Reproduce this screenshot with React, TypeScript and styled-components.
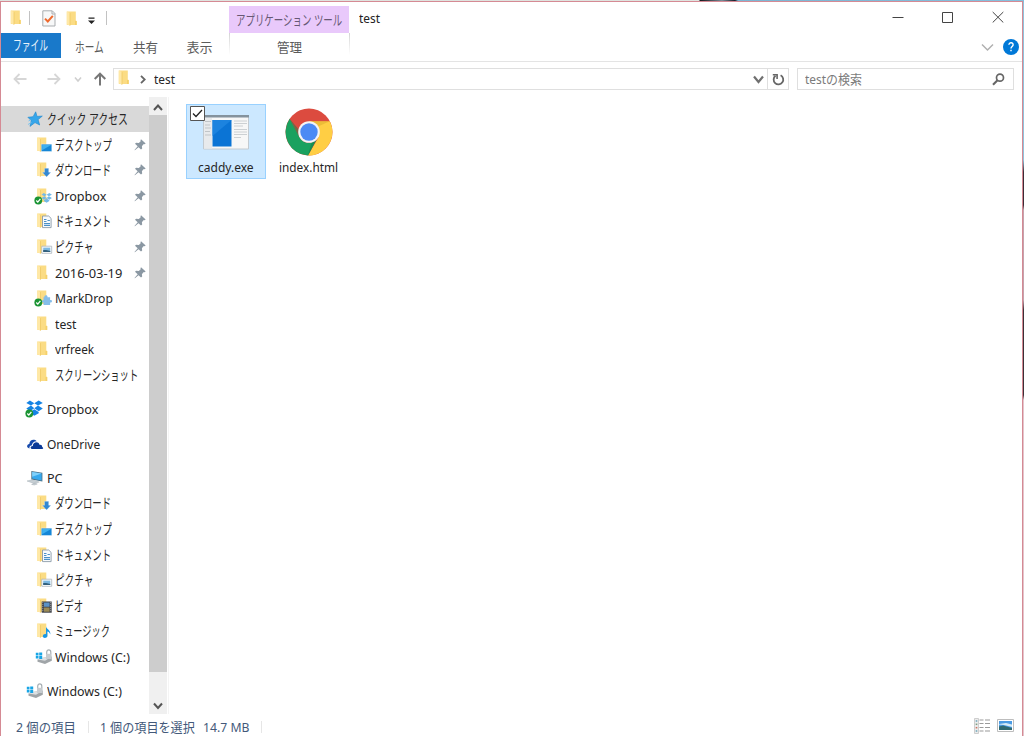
import React, { useLayoutEffect, useRef, useState } from 'react';
import styled, { createGlobalStyle } from 'styled-components';

const Global = createGlobalStyle`
  * { box-sizing: border-box; }
  html, body { margin: 0; height: 100%; overflow: hidden; background: #fff; }
  body { font-family: "Noto Sans", "Noto Sans CJK JP", sans-serif; font-size: 13px; color: #262626; }
  svg { display: block; flex: none; }
`;

const Desktop = styled.div`
  width: 1024px;
  height: 736px;
  padding: 1px 1px 0 0;
  background: linear-gradient(90deg, #dfe3df 0 699px, #15181c 700px, #7a8c98 722px, #17202b 735px, #7db5d2 738px, #86c0de 100%) top / 100% 2px no-repeat,
    linear-gradient(180deg, #8fc3dd 0 160px, #3c2c36 172px 205px, #c5a3ad 210px 300px, #3c3037 310px 395px, #e4c5cc 400px) right / 1px 100% no-repeat;
`;
const Window = styled.div`
  height: 735px;
  display: flex;
  flex-direction: column;
  background: #fff;
  border: 1px solid #d58a94;
  border-bottom: 0;
`;
const TitleBar = styled.header`
  height: 31px;
  display: flex;
  flex: none;
`;
const QuickTools = styled.div`
  width: 228px;
  display: flex;
  padding: 8px 0 0 9px;
`;
const ToolSlot = styled.div<{ $w: number; $top?: number }>`
  width: ${p => p.$w}px;
  padding-top: ${p => p.$top ?? 0}px;
  flex: none;
`;
const Separator = styled.div<{ $h: number; $gap: number; $top?: number }>`
  width: 1px;
  height: ${p => p.$h}px;
  margin: ${p => p.$top ?? 0}px ${p => p.$gap}px 0 0;
  background: #c2c2c2;
  flex: none;
`;
const ContextHeading = styled.div`
  width: 120px;
  height: 27px;
  margin-top: 4px;
  padding: 4px 0 0 7px;
  background: #e9c9fb;
  color: #675874;
`;
const WindowTitle = styled.div`
  flex: 1;
  padding: 6px 0 0 10px;
  color: #222;
`;
const Controls = styled.div`
  display: flex;
  gap: 38px;
  padding: 9px 18px 0 0;
`;
const Tabs = styled.nav`
  height: 28px;
  display: flex;
  flex: none;
  align-items: flex-start;
  color: #5b5b5b;
`;
const FileTab = styled.div`
  width: 59.500px;
  height: 25px;
  padding: 2px 0 0 12px;
  background: #1979ca;
  color: #e9f3fc;
`;
const Tab = styled.div<{ $w: number; $pl: number }>`
  width: ${p => p.$w}px;
  padding: 4px 0 0 ${p => p.$pl}px;
  flex: none;
`;
const ContextTab = styled.div`
  width: 121px;
  height: 22px;
  padding: 4px 0 0 48px;
  background: linear-gradient(#d4d4d4, #fff) left / 1px 100% no-repeat,
    linear-gradient(#d4d4d4, #fff) right / 1px 100% no-repeat;
`;
const RibbonTools = styled.div`
  display: flex;
  gap: 9px;
  margin-left: auto;
  padding: 6px 3px 0 0;
  align-items: center;
`;
const AddressRow = styled.div`
  height: 36px;
  display: flex;
  flex: none;
  padding: 6px 8px 0 12px;
  border-top: 1px solid #e4e4e4;
`;
const NavIcons = styled.div`
  width: 100px;
  height: 22px;
  display: flex;
  align-items: center;
`;
const NavSlot = styled.div<{ $w: number }>`
  width: ${p => p.$w}px;
  flex: none;
`;
const Box = styled.div<{ $w: number; $pl: number }>`
  width: ${p => p.$w}px;
  height: 22px;
  display: flex;
  align-items: center;
  padding-left: ${p => p.$pl}px;
  border: 1px solid #dfdfdf;
`;
const Refresh = styled.div`
  width: 21px;
  height: 22px;
  margin-right: 8px;
  display: grid;
  place-items: center;
  border: 1px solid #dfdfdf;
  border-left: 0;
`;
const CrumbIcon = styled.div`
  width: 22px;
  padding-bottom: 3px;
`;
const Crumb = styled.div`
  flex: 1;
  padding: 0 0 1px 7px;
`;
const SearchHint = styled.div`
  flex: 1;
  padding-bottom: 1px;
  color: #7b7b7b;
`;
const End = styled.div<{ $gap: number }>`
  padding-right: ${p => p.$gap}px;
`;
const Body = styled.main`
  flex: 1;
  min-height: 0;
  display: flex;
`;
const Tree = styled.aside`
  width: 148px;
  padding-top: 9.3px;
`;
const Row = styled.div<{ $level: number; $active?: boolean; $gap?: boolean }>`
  height: 25.6px;
  margin-top: ${p => (p.$gap ? 8.7 : 0)}px;
  padding-left: ${p => (p.$level ? 32.5 : 24)}px;
  padding-right: 3px;
  display: flex;
  align-items: center;
  background: ${p => (p.$active ? '#d9d9d9' : 'transparent')};
`;
const RowLabel = styled.div`
  flex: 1;
  padding-left: 1.5px;
`;
const Scrollbar = styled.div`
  width: 18px;
  height: 617px;
  display: flex;
  flex-direction: column;
  background: #f0f0f0;
`;
const Arrow = styled.div<{ $h: number; $bottom?: boolean }>`
  height: ${p => p.$h}px;
  display: flex;
  justify-content: center;
  align-items: ${p => (p.$bottom ? 'flex-end' : 'center')};
  padding: ${p => (p.$bottom ? '0 0 4px' : '4px 0 0')};
`;
const Thumb = styled.div`
  height: 557px;
  background: #cdcdcd;
`;
const Files = styled.section`
  display: flex;
  align-items: flex-start;
  height: 617px;
  padding: 7px 0 0 17px;
  margin-left: 1px;
  border-left: 1px solid #f4f4f4;
  gap: 2.500px;
`;
const File = styled.div<{ $selected?: boolean }>`
  position: relative;
  width: 80px;
  height: 75px;
  display: flex;
  flex-direction: column;
  align-items: center;
  justify-content: space-between;
  padding: 3px 0 1px;
  border: 1px solid ${p => (p.$selected ? '#99d1ff' : 'transparent')};
  background: ${p => (p.$selected ? '#cce8ff' : 'transparent')};
`;
const Check = styled.div`
  position: absolute;
  left: 3px;
  top: 1px;
`;
const StatusBar = styled.footer`
  height: 21px;
  flex: none;
  display: flex;
  align-items: center;
  padding: 3px 8px 0 15px;
  color: #43597a;
`;
const StatusItem = styled.div<{ $w: number }>`
  width: ${p => p.$w}px;
`;
const StatusLine = styled.div<{ $gap: number }>`
  width: 1px;
  height: 12px;
  margin-right: ${p => p.$gap}px;
  background: #e6e6e6;
`;
const Views = styled.div`
  margin: -3px 0 0 auto;
  display: flex;
  align-items: center;
  gap: 7px;
`;
const TextBox = styled.span<{ $size: number }>`
  display: block;
  height: 20px;
  line-height: 20px;
  font-size: ${p => p.$size}px;
  white-space: nowrap;
`;
const TextInk = styled.span`
  display: inline-block;
  height: 20px;
  vertical-align: top;
  transform-origin: 0 50%;
`;

/* A one-line label whose glyphs are condensed or widened to fill `w` pixels. */
function Fit({ w, size = 13, children }: { w: number; size?: number; children: string }) {
  const ref = useRef<HTMLSpanElement>(null);
  const [scale, setScale] = useState(1);
  useLayoutEffect(() => {
    if (ref.current) setScale(w / ref.current.offsetWidth);
  }, [w, children]);
  return (
    <TextBox $size={size} style={{ width: w }}>
      <TextInk ref={ref} style={{ transform: `scaleX(${scale})` }}>{children}</TextInk>
    </TextBox>
  );
}

const FolderShape = () => (
  <>
    <path d="M3.800 1.600h9v8.800l.9.600v4H3.800z" fill="#fbdc84" />
    <path d="M12 11h1.700v4H12z" fill="#f5d06a" />
    <path d="M3.800 1.600l3.200 1.500v12.600l-3.200-1.500z" fill="#ffe8a6" />
    <path d="M7 3.100v12.600" stroke="#edc65c" strokeWidth=".7" />
  </>
);
const Badge = () => (
  <>
    <circle cx="4.800" cy="13.500" r="3.900" fill="#1b9434" />
    <path d="M2.800 13.500l1.500 1.600 2.600-3.200" stroke="#fff" strokeWidth="1.300" fill="none" />
  </>
);
const DropMark = ({ color }: { color: string }) => (
  <path fill={color} d="M4.600 0L9 2.800 5.700 5.200 1 2.600zM13.400 0L17.500 2.600 12.700 5.200 9 2.800zM1 8.100l4.700-2.900L9 7.900l-4.400 2.900zM12.700 5.200l4.800 2.900-4.100 2.700L9 7.900zM4.800 11.600L9 8.800l4.400 2.800v1.200L9 15.400l-4.200-2.600z" />
);

type Kind = 'star' | 'folder' | 'desktop' | 'down' | 'dropfolder' | 'doc' | 'pic' | 'mark' | 'dropbox' | 'onedrive' | 'pc' | 'video' | 'music' | 'drive';

function drawing(kind: Kind) {
  switch (kind) {
    case 'star':
      return <><path d="M11.200 1.800l1.300 4.600 5.300-.3-4.200 3.500 1.600 5.400-4.700-2.400-5 3.800 1.200-5.800-3.300-3.300 5.200-.6z" fill="#35a6ea" stroke="#1b84cc" strokeWidth=".6" /><path d="M3.500 14.500l3.500-2.200M4 11l2-1" stroke="#7cc4ee" /></>;
    case 'folder':
      return <FolderShape />;
    case 'desktop':
      return <><FolderShape /><path d="M7.800 8.200h10.500v7.300H7.800z" fill="#1586d6" stroke="#fff" strokeWidth=".4" /><path d="M8.600 8.900h9l-9 5.300z" fill="#3eb0f0" /></>;
    case 'down':
      return <><FolderShape /><path d="M11 7.300h4.200v4h2.300l-4.400 4.800-4.400-4.800H11z" fill="#3388d3" stroke="#fff" strokeWidth=".3" /></>;
    case 'dropfolder':
      return <><FolderShape /><g transform="translate(7.400 6) scale(.63)"><DropMark color="#72b9e8" /></g><Badge /></>;
    case 'doc':
      return <><FolderShape /><path d="M9 4h6.200l2.400 2.400v9.200H9z" fill="#f7fafc" stroke="#8a9aa8" strokeWidth=".9" /><path d="M10.500 7.500H13M10.500 9.500H13M14 8.500h2.400M10.500 11.600h6M10.500 13.500h6" stroke="#4a90c8" strokeWidth="1.200" /></>;
    case 'pic':
      return <><FolderShape /><path d="M8.300 8.200h9.900v7.100H8.300z" fill="#fff" stroke="#aab4bc" strokeWidth=".8" /><path d="M9.700 9.600h7.100v4.300H9.700z" fill="#7db9e2" /><path d="M9.700 13.900v-2l3 .1 4.100 1v.9z" fill="#33607d" /></>;
    case 'mark':
      return <><FolderShape /><path d="M11 8.300c-1-2.600 3.700-2.800 3 0h2.600v2.700c2.600-.6 2.600 2.800 0 2.500V16H10v-2.500c-2 .3-2.300-2.700 0-2.300V8.300z" fill="#85bde9" /><Badge /></>;
    case 'dropbox':
      return <><g transform="translate(.8 .4)"><DropMark color="#1583e4" /></g><Badge /></>;
    case 'onedrive':
      return <><path d="M5 13.400C1.800 13 2 9.400 4.800 9c.2-4 4.700-5.600 7.400-2.700-3.200 0-4.500 2-4.800 3.900-2.300.3-2.700 2-2.400 3.200z" fill="#1549ac" /><path d="M8 14c-2.500-.2-2.500-3 .3-3.100.2-4.300 5.700-4.700 6.700-1.200 2.200-.3 2.900 1.200 2.600 2.200 1.600.4 1.400 2.100 0 2.100z" fill="#0a3996" /></>;
    case 'pc':
      return <><path d="M6.800 1.900l11.100 1.900v8.800L6.800 10.400z" fill="#4d7187" /><path d="M7.700 3l9.400 1.600v6.900L7.700 9.600z" fill="#36a8ed" /><path d="M7.700 3l9.400 1.600-9.400 3.200z" fill="#7fd0fa" /><path d="M2.500 12l5-1.200 7.300 2.200-5.200 1.400zM9.800 14l3 1-3 1-2.700-.6z" fill="#c8d0d5" stroke="#a9b2b8" strokeWidth=".5" /></>;
    case 'video':
      return <><FolderShape /><path d="M8.200 4.500h10v11.200h-10z" fill="#3a3d43" /><path d="M10.400 5.600h5.700v4.100h-5.700z" fill="#5b92c6" /><path d="M10.400 10.600h5.700v4.100h-5.700z" fill="#9a8a55" /><path d="M9.300 5.200v10M17.200 5.200v10" stroke="#cfd2d6" strokeWidth=".8" strokeDasharray="1 1" /></>;
    case 'music':
      return <><FolderShape /><path d="M12.500 4.500c.3 2.700 5 3.400 4.300 8-.7-2-1.700-3-2.900-3.100v4.300c-.2 3-4.800 2.900-4.600.4.100-1.800 1.900-2.400 3.200-1.900z" fill="#1797e6" /></>;
    case 'drive':
      return <><path d="M4 11.500l4-1.500 10.300-1.500v4.200L11.500 16 4 13.800z" fill="#a0a5a8" /><path d="M4 11.500l4-1.500 10.300-1.500-6.800 4.300z" fill="#dcdfe1" /><path d="M2.300 4.800h2.700v2.600H2.300zM5.700 4.400h3v3h-3zM2.300 8.100h2.700v2.500H2.300zM5.700 8.100h3v3h-3z" fill="#18a5e5" /><path d="M13.200 6V4.200c0-3 4.100-3 4.100 0V6" fill="none" stroke="#a8b0b4" strokeWidth="1.200" /><path d="M12.500 5.800h5.600v5.200h-5.600z" fill="#c6cbcf" /></>;
  }
}
const Glyph = ({ kind }: { kind: Kind }) => <svg width="20" height="18" viewBox="0.5 0 20 18">{drawing(kind)}</svg>;

const Pin = () => (
  <svg width="12" height="12" viewBox="0 0 12 12">
    <path d="M7 .3l4.700 4.300-1.300.7-1-.1-1.500 2 .3 2.300-1.200 1.100-2.500-2.400-3.600 3.100-.4-.4L3.700 7.200 1 4.800l1.100-1 2.700.2 1.900-1.700-.2-1z" fill="#8b98a3" />
  </svg>
);
const Chevron = ({ w, h, color, stroke = 2, flip }: { w: number; h: number; color: string; stroke?: number; flip?: boolean }) => (
  <svg width={w} height={h + 2} viewBox={`0 0 ${w} ${h + 2}`}>
    <path d={flip ? `M1 ${h}L${w / 2} 1.500L${w - 1} ${h}` : `M1 1.500L${w / 2} ${h}L${w - 1} 1.500`} fill="none" stroke={color} strokeWidth={stroke} />
  </svg>
);

interface Item { kind: Kind; text: string; w: number; level: number; pin?: boolean; gap?: boolean; active?: boolean }
const items: Item[] = [
  { kind: 'star', text: 'クイック アクセス', w: 81, level: 0, active: true },
  { kind: 'desktop', text: 'デスクトップ', w: 57, level: 1, pin: true },
  { kind: 'down', text: 'ダウンロード', w: 56, level: 1, pin: true },
  { kind: 'dropfolder', text: 'Dropbox', w: 51.5, level: 1, pin: true },
  { kind: 'doc', text: 'ドキュメント', w: 56, level: 1, pin: true },
  { kind: 'pic', text: 'ピクチャ', w: 38.5, level: 1, pin: true },
  { kind: 'folder', text: '2016-03-19', w: 67.5, level: 1, pin: true },
  { kind: 'mark', text: 'MarkDrop', w: 58, level: 1 },
  { kind: 'folder', text: 'test', w: 21.5, level: 1 },
  { kind: 'folder', text: 'vrfreek', w: 39, level: 1 },
  { kind: 'folder', text: 'スクリーンショット', w: 83, level: 1 },
  { kind: 'dropbox', text: 'Dropbox', w: 51.5, level: 0, gap: true },
  { kind: 'onedrive', text: 'OneDrive', w: 53.5, level: 0, gap: true },
  { kind: 'pc', text: 'PC', w: 15.5, level: 0, gap: true },
  { kind: 'down', text: 'ダウンロード', w: 56, level: 1 },
  { kind: 'desktop', text: 'デスクトップ', w: 57, level: 1 },
  { kind: 'doc', text: 'ドキュメント', w: 56, level: 1 },
  { kind: 'pic', text: 'ピクチャ', w: 38.5, level: 1 },
  { kind: 'video', text: 'ビデオ', w: 28, level: 1 },
  { kind: 'music', text: 'ミュージック', w: 55, level: 1 },
  { kind: 'drive', text: 'Windows (C:)', w: 74.5, level: 1 },
  { kind: 'drive', text: 'Windows (C:)', w: 74.5, level: 0, gap: true },
];
const isKana = (text: string) => /^[\u30a0-\u30ff ]+$/.test(text);

const SmallFolder = () => <svg width="12" height="16" viewBox="3 1 12 16"><FolderShape /></svg>;

const ExeIcon = () => (
  <svg width="48" height="48" viewBox="0 0 48 48">
    <path d="M1.500 7.500h45v33.500h-45z" fill="#f7f7f7" stroke="#c3cad0" />
    <path d="M1 7h46v2.500H1z" fill="#84929d" />
    <path d="M2 10h8v30.500H2z" fill="#e8eaec" />
    <path d="M3 13.500h6M3 17h5M3 20h6M3 23.500h5M3 27h6" stroke="#c1c5c8" />
    <path d="M10.500 12h19v26.500h-19z" fill="#0b74d5" />
    <path d="M10.500 12h19l-19 16z" fill="#1c83df" />
    <path d="M32 13h13M32 15.500h13M32 18h9M32 21.500h13M32 24h13M32 26.500h13M32 29.500h7" stroke="#ccd0d3" />
  </svg>
);
const ChromeIcon = () => (
  <svg width="48" height="48" viewBox="0 0 48 48">
    <circle cx="24" cy="24" r="23.500" fill="#dc4b3f" />
    <path d="M24 13.200h20.800A23.500 23.500 0 0 1 23 47.500L33.400 29.400z" fill="#ffce44" />
    <path d="M4.650 10.750L14.650 29.400A10.800 10.800 0 0 0 31 32.300L23 47.500A23.500 23.500 0 0 1 4.650 10.750z" fill="#1aa15f" />
    <path d="M24 13.200h20.800L34 18z" fill="#d9a92c" opacity=".5" />
    <path d="M32 31L23 47.500l3.500-13z" fill="#12804a" opacity=".6" />
    <path d="M4.650 10.750L13.800 28l1.200-5z" fill="#157f4b" opacity=".5" />
    <circle cx="24" cy="24" r="10.800" fill="#f4f4f4" />
    <circle cx="24" cy="24" r="8.700" fill="#4b8af4" />
  </svg>
);
const NavArrow = ({ left }: { left?: boolean }) => (
  <svg width="14" height="12" viewBox="0 0 14 12">
    <path d={left ? 'M13.500 6H1.500M6.500 1L1.500 6l5 5' : 'M.5 6h12M7.500 1l5 5-5 5'} fill="none" stroke="#d6d6d6" strokeWidth="1.800" />
  </svg>
);

export default function App() {
  return (
    <Desktop>
      <Global />
      <Window>
        <TitleBar>
          <QuickTools>
            <ToolSlot $w={19}><SmallFolder /></ToolSlot>
            <Separator $h={14} $gap={12} $top={1} />
            <ToolSlot $w={24}>
              <svg width="14" height="17" viewBox="0 0 14 17">
                <path d="M.8.800h9.500l2.700 2.700v12.500H.8z" fill="#f7f8f8" stroke="#a9adb0" />
                <path d="M10 1v3h3" fill="none" stroke="#a9adb0" />
                <path d="M3 8.600l2.800 2.900 5-5.600" fill="none" stroke="#ee6a2e" strokeWidth="2" />
              </svg>
            </ToolSlot>
            <ToolSlot $w={22} $top={1}><SmallFolder /></ToolSlot>
            <ToolSlot $w={18} $top={7}>
              <svg width="7" height="8" viewBox="0 0 7 8"><path d="M.5.500h6v1.300h-6zM0 3.500h7L3.500 7z" fill="#222" /></svg>
            </ToolSlot>
            <Separator $h={14} $gap={0} $top={1} />
          </QuickTools>
          <ContextHeading><Fit w={106} size={14}>アプリケーション ツール</Fit></ContextHeading>
          <WindowTitle><Fit w={21}>test</Fit></WindowTitle>
          <Controls>
            <svg width="12" height="12" viewBox="0 0 12 12"><path d="M.5 6.500h11" stroke="#444" /></svg>
            <svg width="12" height="12" viewBox="0 0 12 12"><path d="M.5 1.500h10v10H.5z" fill="none" stroke="#444" /></svg>
            <svg width="12" height="12" viewBox="0 0 12 12"><path d="M.7 1L11.300 11.500M11.300 1L.7 11.500" stroke="#444" /></svg>
          </Controls>
        </TitleBar>
        <Tabs>
          <FileTab><Fit w={35} size={14}>ファイル</Fit></FileTab>
          <Tab $w={58} $pl={14}><Fit w={29} size={14}>ホーム</Fit></Tab>
          <Tab $w={54} $pl={14}><Fit w={25}>共有</Fit></Tab>
          <Tab $w={56.5} $pl={14}><Fit w={26}>表示</Fit></Tab>
          <ContextTab><Fit w={25}>管理</Fit></ContextTab>
          <RibbonTools>
            <Chevron w={13} h={7} color="#b0b0b0" stroke={1.5} />
            <svg width="16" height="16" viewBox="0 0 16 16">
              <circle cx="8" cy="8" r="8" fill="#0078d7" />
              <path d="M5.900 5.800c.1-3 4.400-2.600 4.200.1-.1 1.500-2.100 1.700-2.100 3.600M8 10.700v1.500" fill="none" stroke="#fff" strokeWidth="1.400" />
            </svg>
          </RibbonTools>
        </Tabs>
        <AddressRow>
          <NavIcons>
            <NavSlot $w={34}><NavArrow left /></NavSlot>
            <NavSlot $w={27}><NavArrow /></NavSlot>
            <NavSlot $w={19}><Chevron w={8} h={5} color="#cfcfcf" stroke={1.6} /></NavSlot>
            <svg width="14" height="14" viewBox="0 0 14 14"><path d="M7 13.500V2M1.700 7L7 1.700 12.300 7" fill="none" stroke="#777" strokeWidth="2" /></svg>
          </NavIcons>
          <Box $w={656} $pl={4}>
            <CrumbIcon><SmallFolder /></CrumbIcon>
            <svg width="7" height="9" viewBox="0 0 7 9"><path d="M1 .8l3.700 3.700L1 8.200" fill="none" stroke="#666" strokeWidth="1.800" /></svg>
            <Crumb><Fit w={21}>test</Fit></Crumb>
            <End $gap={3}><Chevron w={11} h={7} color="#707070" stroke={2.2} /></End>
          </Box>
          <Refresh>
            <svg width="13" height="13" viewBox="0 0 13 13">
              <path d="M8.600 2.300A4.800 4.800 0 1 1 3.500 2.800" fill="none" stroke="#666" strokeWidth="1.800" />
              <path d="M.8 1.700h4.300v4.200" fill="none" stroke="#666" strokeWidth="1.600" />
            </svg>
          </Refresh>
          <Box $w={217} $pl={7}>
            <SearchHint><Fit w={57}>testの検索</Fit></SearchHint>
            <End $gap={8}>
              <svg width="13" height="13" viewBox="0 0 13 13">
                <circle cx="8" cy="4.700" r="3.500" fill="none" stroke="#666" strokeWidth="1.700" />
                <path d="M5.500 7.300L1 11.800" stroke="#666" strokeWidth="2.200" />
              </svg>
            </End>
          </Box>
        </AddressRow>
        <Body>
          <Tree>
            {items.map((item, i) => (
              <Row key={i} $level={item.level} $active={item.active} $gap={item.gap}>
                <Glyph kind={item.kind} />
                <RowLabel><Fit w={item.w} size={isKana(item.text) ? 14 : 13}>{item.text}</Fit></RowLabel>
                {item.pin && <Pin />}
              </Row>
            ))}
          </Tree>
          <Scrollbar>
            <Arrow $h={18}><Chevron w={10} h={6} color="#555" flip /></Arrow>
            <Thumb />
            <Arrow $h={42} $bottom><Chevron w={10} h={6} color="#555" /></Arrow>
          </Scrollbar>
          <Files>
            <File $selected>
              <ExeIcon />
              <Check>
                <svg width="15" height="15" viewBox="0 0 15 15"><path d="M.5.500h14v14H.5z" fill="#fff" stroke="#555" /><path d="M3 7.500l3 3 6-6.500" fill="none" stroke="#222" strokeWidth="1.300" /></svg>
              </Check>
              <Fit w={55.5}>caddy.exe</Fit>
            </File>
            <File><ChromeIcon /><Fit w={59}>index.html</Fit></File>
          </Files>
        </Body>
        <StatusBar>
          <StatusItem $w={72}><Fit w={60}>2 個の項目</Fit></StatusItem>
          <StatusLine $gap={11} />
          <StatusItem $w={103}><Fit w={95}>1 個の項目を選択</Fit></StatusItem>
          <StatusItem $w={58}><Fit w={46}>14.7 MB</Fit></StatusItem>
          <StatusLine $gap={0} />
          <Views>
            <svg width="16" height="16" viewBox="0 0 16 16">
              <path d="M.5.500h4v15h-4z" fill="#ececec" stroke="#c4c4c4" strokeWidth=".8" />
              <path d="M1.700 3h1.600M1.700 13h1.600" stroke="#6aa3b5" strokeWidth="1.500" />
              <path d="M1.700 6.300h1.600" stroke="#7f9d83" strokeWidth="1.500" />
              <path d="M1.700 9.700h1.600" stroke="#d0705c" strokeWidth="1.500" />
              <path d="M5.500 2h4M11 2h5M5.500 5.500h4M11 5.500h5M5.500 9.500h4M11 9.500h5M5.500 13h4M11 13h5" stroke="#9a9a9a" strokeWidth="1.200" />
            </svg>
            <svg width="17" height="13" viewBox="0 0 17 13">
              <path d="M.5.500h16v12H.5z" fill="#fff" stroke="#bdbdbd" />
              <path d="M2 2h13v9H2z" fill="#4a9be4" />
              <path d="M2 5.500l5 .5 8 2v-2.500L9 4 2 5z" fill="#d6ecf8" />
              <path d="M2 7.500l4-1 9 2.500v2H2z" fill="#2f6a72" />
            </svg>
          </Views>
        </StatusBar>
      </Window>
    </Desktop>
  );
}
